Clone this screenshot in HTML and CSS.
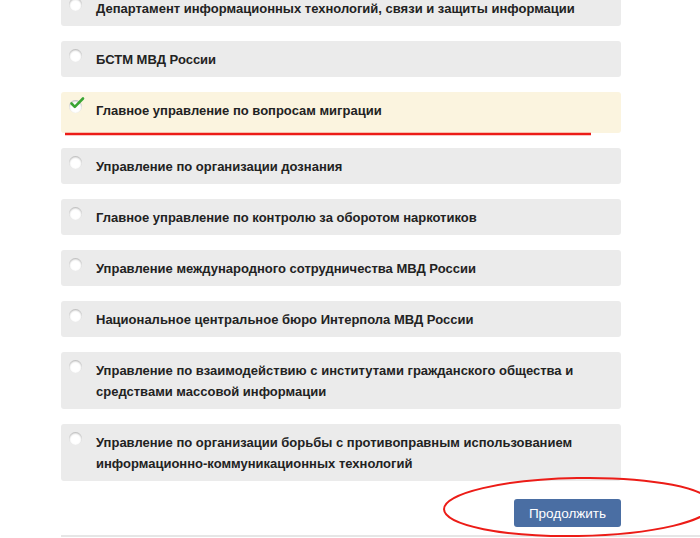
FILE: index.html
```
<!DOCTYPE html>
<html lang="ru">
<head>
  <meta charset="UTF-8" />
  <title>Выбор подразделения</title>
  <link rel="stylesheet" href="styles.css">
</head>
<body>

<div class="page">
  <!-- Options -->
  <div class="options">
    <label class="option">
      <span class="radio"></span>
      <span class="option-text">Департамент информационных технологий, связи и защиты информации</span>
    </label>
    <label class="option">
      <span class="radio"></span>
      <span class="option-text">БСТМ МВД России</span>
    </label>
    <label class="option option-selected">
      <span class="radio radio-checked">
        <svg width="16" height="14" viewBox="0 0 16 14">
          <path d="M2.5 7.5 L5.8 10.8 L14 2.5" fill="none" stroke="#3aa534" stroke-width="2.6" stroke-linecap="round" stroke-linejoin="round"/>
        </svg>
      </span>
      <span class="option-text">Главное управление по вопросам миграции</span>
    </label>
    <label class="option">
      <span class="radio"></span>
      <span class="option-text">Управление по организации дознания</span>
    </label>
    <label class="option">
      <span class="radio"></span>
      <span class="option-text">Главное управление по контролю за оборотом наркотиков</span>
    </label>
    <label class="option">
      <span class="radio"></span>
      <span class="option-text">Управление международного сотрудничества МВД России</span>
    </label>
    <label class="option">
      <span class="radio"></span>
      <span class="option-text">Национальное центральное бюро Интерпола МВД России</span>
    </label>
    <label class="option">
      <span class="radio"></span>
      <span class="option-text">Управление по взаимодействию с институтами гражданского общества и средствами массовой информации</span>
    </label>
    <label class="option">
      <span class="radio"></span>
      <span class="option-text">Управление по организации борьбы с противоправным использованием информационно-коммуникационных технологий</span>
    </label>
  </div>

  <div class="actions">
    <button class="btn-next">Продолжить</button>
  </div>

  <div class="footer-line"></div>

  <!-- Red marker annotations drawn over the screenshot -->
  <svg class="marks" width="700" height="538" viewBox="0 0 700 538">
    <line x1="65" y1="134" x2="591" y2="134" stroke="#ec1c17" stroke-width="2.5"/>
    <ellipse cx="578" cy="507" rx="134" ry="29" transform="rotate(-1 578 507)" fill="none" stroke="#ec1c17" stroke-width="2"/>
  </svg>
</div>

</body>
</html>
```

FILE: styles.css
```
* { margin: 0; padding: 0; box-sizing: border-box; }
html, body {
  height: 100%;
  background: #fff;
  font-family: 'Liberation Sans', Arial, sans-serif;
  color: #222;
  overflow: hidden;
}

.page {
  position: relative;
  display: flow-root;
  height: 100%;
  padding-left: 61px;
}

.options {
  width: 560px;
  margin-top: -10px;
  display: flex;
  flex-direction: column;
  gap: 15px;
}

.option {
  display: flex;
  align-items: flex-start;
  gap: 14px;
  padding: 8px 20px 7px 8px;
  background: #ebebeb;
  border-radius: 3px;
  cursor: pointer;
}

.option-selected {
  background: #fbf4df;
  padding-bottom: 12px;
}

.radio {
  flex: none;
  position: relative;
  width: 13px;
  height: 13px;
  border-radius: 50%;
  background: radial-gradient(circle at 50% 60%, #ffffff 45%, #eeeeee 100%);
  box-shadow: inset 0 1px 2px rgba(0, 0, 0, 0.28);
}

.radio-checked svg {
  position: absolute;
  left: 0;
  top: -4px;
}

.option-text {
  font-size: 13px;
  font-weight: bold;
  line-height: 21px;
}

.actions {
  width: 560px;
  display: flex;
  justify-content: flex-end;
  margin-top: 18px;
}

.btn-next {
  width: 107px;
  height: 28px;
  border: none;
  border-radius: 3px;
  background: #4a6ea3;
  color: #fff;
  font-family: 'Liberation Sans', Arial, sans-serif;
  font-size: 13.5px;
  cursor: pointer;
}

.footer-line {
  margin-top: 8px;
  height: 2px;
  background: #e6e6e6;
}

.marks {
  position: absolute;
  top: 0;
  left: 0;
  pointer-events: none;
}
```
